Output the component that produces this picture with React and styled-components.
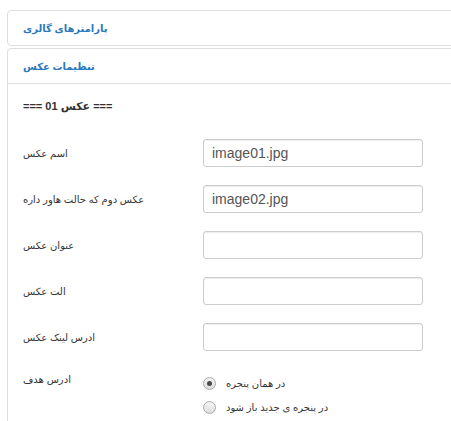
import styled, { createGlobalStyle } from "styled-components";

const GlobalStyle = createGlobalStyle`
    body {
        margin: 0;
        background: #ffffff;
        font-family: "Liberation Sans", "DejaVu Sans", Tahoma, sans-serif;
    }
`;

const fields = [
    { label: "اسم عکس", value: "image01.jpg" },
    { label: "عکس دوم که حالت هاور داره", value: "image02.jpg" },
    { label: "عنوان عکس", value: "" },
    { label: "الت عکس", value: "" },
    { label: "ادرس لینک عکس", value: "" },
];

export default function App () {

    return (
        <Page>
            <GlobalStyle />
            <Panel>
                <PanelHeading>پارامترهای گالری</PanelHeading>
            </Panel>
            <Panel $open>
                <PanelHeading $bordered>تنظیمات عکس</PanelHeading>
                <PanelBody>
                    <SectionTitle>=== عکس 01 ===</SectionTitle>
                    {fields.map((f) => (
                        <FormRow key={f.label}>
                            <Label>{f.label}</Label>
                            <TextInput defaultValue={f.value} />
                        </FormRow>
                    ))}
                    <RadioRow>
                        <Label>ادرس هدف</Label>
                        <RadioList>
                            <RadioItem>
                                <Radio $checked />
                                <RadioText>در همان پنجره</RadioText>
                            </RadioItem>
                            <RadioItem>
                                <Radio />
                                <RadioText>در پنجره ی جدید باز شود</RadioText>
                            </RadioItem>
                        </RadioList>
                    </RadioRow>
                </PanelBody>
            </Panel>
        </Page>
    );

}

const Page = styled.div`

    width: 451px;
    height: 421px;
    overflow: hidden;

    padding: 10px 0 0 7px;
    box-sizing: border-box;

`;

const Panel = styled.div`

    width: 460px;

    margin-bottom: 2px;

    border: 1px solid #dddddd;
    border-radius: 4px;

    ${(p) => p.$open && "min-height: 400px;"}

`;

const PanelHeading = styled.div`

    height: 34px;

    padding-left: 15px;

    display: flex;
    align-items: center;

    color: #2a78bd;
    font-size: 10px;
    font-weight: bold;

    ${(p) => p.$bordered && "border-bottom: 1px solid #dddddd;"}

`;

const PanelBody = styled.div`

    padding: 15px 0 0 15px;

`;

const SectionTitle = styled.div`

    height: 15px;
    margin-bottom: 25px;

    color: #333333;
    font-size: 11px;
    font-weight: bold;
    line-height: 15px;

`;

const FormRow = styled.div`

    height: 28px;
    margin-bottom: 18px;

    display: flex;
    align-items: center;

`;

const Label = styled.div`

    width: 180px;

    color: #333333;
    font-size: 10px;

`;

const TextInput = styled.input`

    width: 220px;
    height: 28px;

    padding: 0 8px;
    box-sizing: border-box;

    border: 1px solid #cccccc;
    border-radius: 3px;
    box-shadow: inset 0 1px 1px rgba(0, 0, 0, 0.075);

    color: #555555;
    font-family: "Liberation Sans", Arial, sans-serif;
    font-size: 14px;

`;

const RadioRow = styled.div`

    margin-top: 23px;

    display: flex;
    align-items: flex-start;

`;

const RadioList = styled.div`

    display: flex;
    flex-direction: column;
    gap: 11px;

    margin-top: 3px;

`;

const RadioItem = styled.div`

    display: flex;
    align-items: center;
    gap: 10px;

`;

const Radio = styled.span`

    width: 11px;
    height: 11px;

    display: flex;
    align-items: center;
    justify-content: center;

    border: 1px solid #a9a9a9;
    border-radius: 50%;
    background: linear-gradient(#f4f4f4, #dedede);

    &::after {
        content: "";
        width: 5px;
        height: 5px;
        border-radius: 50%;
        background: ${(p) => (p.$checked ? "#4a4a4a" : "transparent")};
    }

`;

const RadioText = styled.span`

    color: #333333;
    font-size: 10px;

`;
